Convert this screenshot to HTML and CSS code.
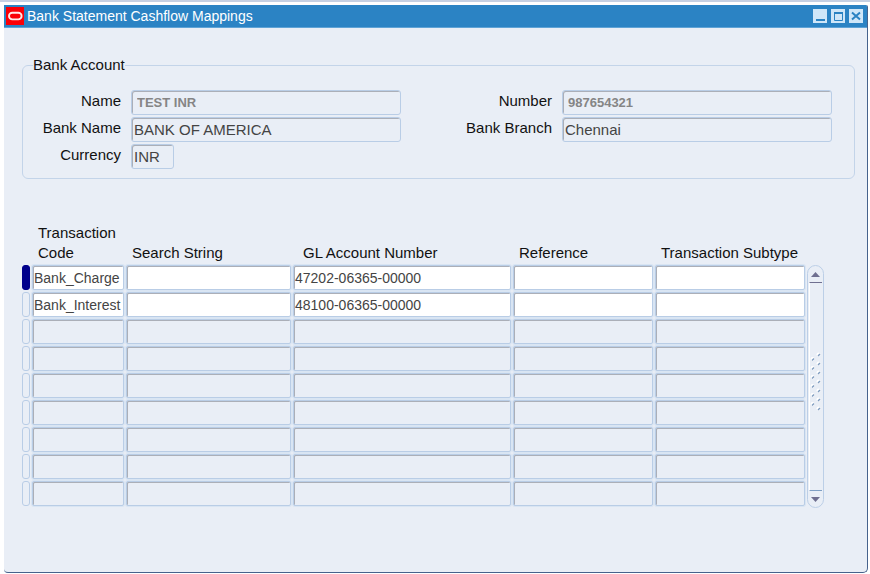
FILE: index.html
```html
<!DOCTYPE html>
<html lang="en">
<head>
    <meta charset="UTF-8">
    <meta name="viewport" content="width=device-width, initial-scale=1.0">
    <title>Bank Statement Cashflow Mappings</title>
    <link rel="stylesheet" href="styles.css">
</head>
<body>
    <main class="window">
        <header class="titlebar">
            <svg class="logo" width="18" height="18" viewBox="0 0 18 18" aria-hidden="true">
                <rect width="18" height="18" fill="#fb0007"/>
                <rect x="3" y="5.8" width="12.6" height="6.6" rx="3.3" fill="none" stroke="#ffe9e9" stroke-width="1.9"/>
            </svg>
            <h1>Bank Statement Cashflow Mappings</h1>
            <div class="window-buttons">
                <button type="button" aria-label="Minimize">
                    <svg width="14" height="14" viewBox="0 0 14 14"><path d="M3 11h9" stroke="#2a82c2" stroke-width="2"/></svg>
                </button>
                <button type="button" aria-label="Maximize">
                    <svg width="14" height="14" viewBox="0 0 14 14"><path d="M3.5 4v7.5h8V4" fill="none" stroke="#2a82c2"/><path d="M3 4h9" stroke="#2a82c2" stroke-width="2"/></svg>
                </button>
                <button type="button" aria-label="Close">
                    <svg width="14" height="14" viewBox="0 0 14 14"><path d="M3 3.5l8 7M11 3.5l-8 7" stroke="#2a82c2" stroke-width="2"/></svg>
                </button>
            </div>
        </header>

        <form>
            <fieldset class="account">
                <legend>Bank Account</legend>
                <div class="account-grid">
                    <label for="name">Name</label>
                    <input class="bold" type="text" id="name" value="TEST INR" readonly>
                    <label for="number">Number</label>
                    <input class="bold" type="text" id="number" value="987654321" readonly>

                    <label for="bank-name">Bank Name</label>
                    <input type="text" id="bank-name" value="BANK OF AMERICA" readonly>
                    <label for="bank-branch">Bank Branch</label>
                    <input type="text" id="bank-branch" value="Chennai" readonly>

                    <label for="currency">Currency</label>
                    <input class="short" type="text" id="currency" value="INR" readonly>
                </div>
            </fieldset>

            <div class="mappings">
                <table>
                    <colgroup>
                        <col class="col-mark">
                        <col class="col-code">
                        <col class="col-search">
                        <col class="col-gl">
                        <col class="col-ref">
                        <col class="col-subtype">
                    </colgroup>
                    <thead>
                        <tr>
                            <td></td>
                            <th scope="col">Transaction Code</th>
                            <th scope="col">Search String</th>
                            <th scope="col" class="indent">GL Account Number</th>
                            <th scope="col">Reference</th>
                            <th scope="col">Transaction Subtype</th>
                        </tr>
                    </thead>
                    <tbody id="rows"></tbody>
                </table>

                <div class="scrollbar">
                    <button type="button" class="up" aria-label="Scroll up">
                        <svg width="9" height="5" viewBox="0 0 9 5"><path d="M0 5L4.5 0L9 5z" fill="#6f6f90"/></svg>
                    </button>
                    <div class="thumb">
                        <svg id="grip" width="12" height="60" viewBox="0 0 12 60" aria-hidden="true"></svg>
                    </div>
                    <button type="button" class="down" aria-label="Scroll down">
                        <svg width="9" height="5" viewBox="0 0 9 5"><path d="M0 0L4.5 5L9 0z" fill="#6f6f90"/></svg>
                    </button>
                </div>
            </div>
        </form>
    </main>

    <script src="script.js"></script>
</body>
</html>
```
FILE: styles.css
```css
* {
    box-sizing: border-box;
}

body {
    margin: 0;
    padding: 3px 2px 2px 4px;
    min-height: 100vh;
    display: flex;
    border-top: 2px solid #c5d0e3;
    background-color: #fff;
    color: #111;
    font-family: "Liberation Sans", Arial, sans-serif;
    font-size: 15px;
    line-height: 20px;
}

.window {
    flex: 1;
    background-color: #e9eef6;
    border-right: 1px solid #46628c;
    border-bottom: 1px solid #46628c;
    border-radius: 0 2px 5px 4px;
    overflow: hidden;
}

/* title bar */
.titlebar {
    display: flex;
    align-items: center;
    height: 23px;
    padding: 0 4px 0 2px;
    background-color: #2b83c4;
    border-bottom: 1px solid #5fa3d6;
}

.titlebar h1 {
    flex: 1;
    margin: 0 0 0 3px;
    color: #fff;
    font-size: 14px;
    font-weight: normal;
}

.window-buttons {
    display: flex;
    gap: 4px;
}

.window-buttons button {
    width: 14px;
    height: 14px;
    padding: 0;
    border: none;
    background-color: #cfe6f8;
}

svg {
    display: block;
}

/* fields */
input {
    width: 100%;
    height: 25px;
    margin: 0;
    padding: 0 2px;
    border: 1px solid #b9cde6;
    border-radius: 3px;
    background-color: #e9eef6;
    box-shadow: inset 1px 1px 0 #abafb8;
    color: #444;
    font-family: inherit;
    font-size: 15px;
    outline: none;
}

input.bold {
    padding: 0 5px;
    color: #858585;
    font-size: 13px;
    font-weight: bold;
}

input.short {
    width: 43px;
}

.account {
    margin: 27px 12px 0 18px;
    padding: 15px 22px 9px 0;
    border: 1px solid #c3d4e9;
    border-radius: 6px;
}

.account legend {
    margin-left: 10px;
    padding: 0;
}

.account-grid {
    display: grid;
    grid-template-columns: 98px 1fr 141px 1fr;
    gap: 2px 10px;
}

.account-grid label {
    text-align: right;
    line-height: 22px;
}

/* mappings table */
.mappings {
    display: flex;
    padding: 42px 43px 64px 16px;
}

table {
    flex: 1;
    width: 100%;
    table-layout: fixed;
    border-spacing: 2px;
}

.col-mark { width: 8px; }
.col-code { width: 92px; }
.col-search { width: 165px; }
.col-gl { width: 218px; }
.col-ref { width: 140px; }
.col-subtype { width: 150px; }

th {
    padding: 0 0 0 6px;
    font-weight: normal;
    text-align: left;
    vertical-align: bottom;
}

th.indent {
    padding-left: 10px;
}

td {
    padding: 0;
}

td input {
    display: block;
    padding: 0 1px;
    border-radius: 2px;
    box-shadow: inset 1px 1px 0 #abafb8, 0 0 0 1px #d9e5f3;
    font-size: 14px;
}

tr.filled input {
    background-color: #fff;
}

.mark {
    display: block;
    width: 100%;
    height: 25px;
    padding: 0;
    border: 1px solid #b9cde6;
    border-radius: 3px;
    background-color: #e9eef6;
}

.mark.current {
    border-color: #00008b;
    background-color: #00008b;
}

/* scrollbar */
.scrollbar {
    display: flex;
    flex-direction: column;
    width: 17px;
    margin-top: 44px;
    border: 1px solid #bccfe7;
    border-radius: 9px;
}

.scrollbar button {
    display: flex;
    justify-content: center;
    align-items: center;
    height: 16px;
    padding: 0;
    border: none;
    background: none;
}

.thumb {
    flex: 1;
    display: flex;
    justify-content: center;
    align-items: center;
    margin: 0 1px;
    padding-bottom: 10px;
    border-top: 1px solid #6f6f90;
    border-bottom: 1px solid #7f9fc4;
    border-left: 1px solid #fff;
}
```
FILE: script.js
```javascript
const columns = ['Transaction Code', 'Search String', 'GL Account Number', 'Reference', 'Transaction Subtype'];
const mappings = [
    ['Bank_Charge', '', '47202-06365-00000', '', ''],
    ['Bank_Interest', '', '48100-06365-00000', '', '']
];
const rowCount = 9;

const rows = document.getElementById('rows');
for (let i = 0; i < rowCount; i++) {
    const values = mappings[i] || ['', '', '', '', ''];
    const row = document.createElement('tr');
    if (mappings[i]) row.className = 'filled';
    row.innerHTML = `<td><button type="button" class="mark${i === 0 ? ' current' : ''}" aria-label="Select row ${i + 1}"></button></td>` +
        values.map((value, c) =>
            `<td><input type="text" aria-label="${columns[c]} ${i + 1}" value="${value}"></td>`
        ).join('');
    rows.appendChild(row);
}

// two staggered columns of dots on the scrollbar thumb
let dots = '';
for (let i = 0; i < 13; i++) {
    const x = i % 2 ? 3 : 9;
    const y = 3 + i * 4.5;
    dots += `<circle cx="${x - 0.5}" cy="${y - 0.5}" r="2" fill="#fff"/>` +
        `<path d="M${x - 1} ${y + 1}l2 -2" stroke="#7f9cc0" stroke-width="1.4"/>`;
}
document.getElementById('grip').innerHTML = dots;
```
